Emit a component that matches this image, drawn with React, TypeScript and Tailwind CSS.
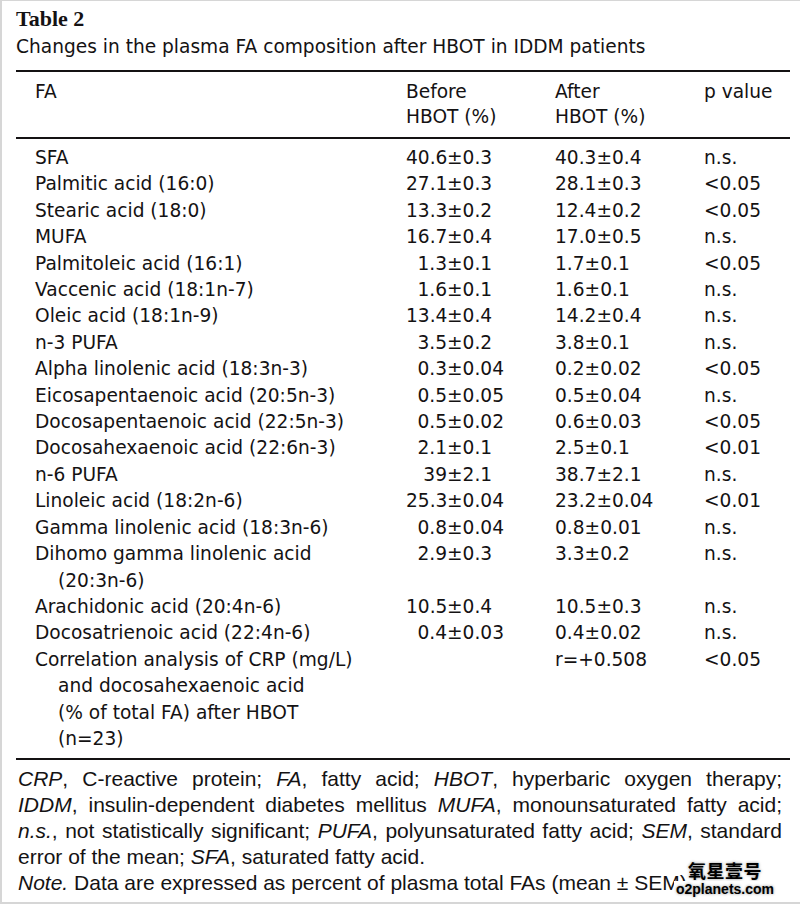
import React from "react"

type Row = {
  name: string[]
  bInt?: string
  bRest?: string
  after?: string
  p?: string
}

const rows: Row[] = [
  { name: ["SFA"], bInt: "40.6", bRest: "±0.3", after: "40.3±0.4", p: "n.s." },
  { name: ["Palmitic acid (16:0)"], bInt: "27.1", bRest: "±0.3", after: "28.1±0.3", p: "<0.05" },
  { name: ["Stearic acid (18:0)"], bInt: "13.3", bRest: "±0.2", after: "12.4±0.2", p: "<0.05" },
  { name: ["MUFA"], bInt: "16.7", bRest: "±0.4", after: "17.0±0.5", p: "n.s." },
  { name: ["Palmitoleic acid (16:1)"], bInt: "1.3", bRest: "±0.1", after: "1.7±0.1", p: "<0.05" },
  { name: ["Vaccenic acid (18:1n-7)"], bInt: "1.6", bRest: "±0.1", after: "1.6±0.1", p: "n.s." },
  { name: ["Oleic acid (18:1n-9)"], bInt: "13.4", bRest: "±0.4", after: "14.2±0.4", p: "n.s." },
  { name: ["n-3 PUFA"], bInt: "3.5", bRest: "±0.2", after: "3.8±0.1", p: "n.s." },
  { name: ["Alpha linolenic acid (18:3n-3)"], bInt: "0.3", bRest: "±0.04", after: "0.2±0.02", p: "<0.05" },
  { name: ["Eicosapentaenoic acid (20:5n-3)"], bInt: "0.5", bRest: "±0.05", after: "0.5±0.04", p: "n.s." },
  { name: ["Docosapentaenoic acid (22:5n-3)"], bInt: "0.5", bRest: "±0.02", after: "0.6±0.03", p: "<0.05" },
  { name: ["Docosahexaenoic acid (22:6n-3)"], bInt: "2.1", bRest: "±0.1", after: "2.5±0.1", p: "<0.01" },
  { name: ["n-6 PUFA"], bInt: "39", bRest: "±2.1", after: "38.7±2.1", p: "n.s." },
  { name: ["Linoleic acid (18:2n-6)"], bInt: "25.3", bRest: "±0.04", after: "23.2±0.04", p: "<0.01" },
  { name: ["Gamma linolenic acid (18:3n-6)"], bInt: "0.8", bRest: "±0.04", after: "0.8±0.01", p: "n.s." },
  { name: ["Dihomo gamma linolenic acid", "(20:3n-6)"], bInt: "2.9", bRest: "±0.3", after: "3.3±0.2", p: "n.s." },
  { name: ["Arachidonic acid (20:4n-6)"], bInt: "10.5", bRest: "±0.4", after: "10.5±0.3", p: "n.s." },
  { name: ["Docosatrienoic acid (22:4n-6)"], bInt: "0.4", bRest: "±0.03", after: "0.4±0.02", p: "n.s." },
  {
    name: [
      "Correlation analysis of CRP (mg/L)",
      "and docosahexaenoic acid",
      "(% of total FA) after HBOT",
      "(n=23)",
    ],
    after: "r=+0.508",
    p: "<0.05",
  },
]

const body = "font-['DejaVu_Sans',sans-serif] text-[18.6px]"

const App = () => {
  return (
    <div className="relative h-[904px] w-[800px] overflow-hidden border-t border-b-2 border-l-2 border-[#d6d6d6] bg-white text-[#141213]">
      <div className="pl-[14px] pr-[10px] pt-[5px]">
        <div className="font-['Liberation_Serif',serif] text-[22px] font-bold leading-[26px]">
          Table 2
        </div>
        <div className={`${body} mt-[1px] leading-[28px]`}>
          Changes in the plasma FA composition after HBOT in IDDM patients
        </div>

        <div className="mt-[9px] h-[2px] bg-[#141213]" />

        {/* header */}
        <div className={`${body} grid grid-cols-[371px_149px_149px_1fr] pl-[19px] pt-[7px] pb-[8px] leading-[25px]`}>
          <div>FA</div>
          <div>
            Before
            <br />
            HBOT (%)
          </div>
          <div>
            After
            <br />
            HBOT (%)
          </div>
          <div>p value</div>
        </div>

        <div className="h-[2px] bg-[#141213]" />

        <div className={`${body} pl-[19px] pt-[6px] pb-[6px] leading-[26.4px]`}>
          {rows.map((r, i) => (
            <div key={i} className="grid grid-cols-[371px_149px_149px_1fr]">
              <div>
                {r.name.map((n, j) => (
                  <div key={j} className={j > 0 ? "pl-[23px]" : ""}>
                    {n}
                  </div>
                ))}
              </div>
              <div className="flex">
                {r.bInt && (
                  <>
                    <span className="w-[41px] text-right">{r.bInt}</span>
                    <span>{r.bRest}</span>
                  </>
                )}
              </div>
              <div>{r.after}</div>
              <div>{r.p}</div>
            </div>
          ))}
        </div>

        <div className="h-[2px] bg-[#141213]" />

        {/* footnote */}
        <div className="pt-[6px] pr-[8px] pl-[2px] font-['Liberation_Sans',sans-serif] text-[21px] leading-[26px]">
          <div className="text-justify [text-align-last:justify]">
            <i>CRP</i>, C-reactive protein; <i>FA</i>, fatty acid; <i>HBOT</i>, hyperbaric oxygen therapy;
          </div>
          <div className="text-justify [text-align-last:justify]">
            <i>IDDM</i>, insulin-dependent diabetes mellitus <i>MUFA</i>, monounsaturated fatty acid;
          </div>
          <div className="text-justify [text-align-last:justify]">
            <i>n.s.</i>, not statistically significant; <i>PUFA</i>, polyunsaturated fatty acid; <i>SEM</i>,
            standard
          </div>
          <div>
            error of the mean; <i>SFA</i>, saturated fatty acid.
          </div>
          <div>
            <i>Note.</i> Data are expressed as percent of plasma total FAs (mean ± SEM).
          </div>
        </div>
      </div>

      {/* watermark */}
      <div className="absolute left-[670px] top-[858px] flex w-[106px] flex-col items-center">
        <div className="font-['Noto_Sans_CJK_SC',sans-serif] text-[18px] font-bold leading-[22px] tracking-[0.5px] text-black [text-shadow:0_0_3px_rgba(0,0,0,0.45),0_0_2px_#fff]">
          氧星壹号
        </div>
        <div className="bg-white px-[2px] font-['Liberation_Sans',sans-serif] text-[14px] font-bold leading-[17px] text-black [text-shadow:0_0_3px_rgba(0,0,0,0.45)]">
          o2planets.com
        </div>
      </div>
    </div>
  )
}

export default App
